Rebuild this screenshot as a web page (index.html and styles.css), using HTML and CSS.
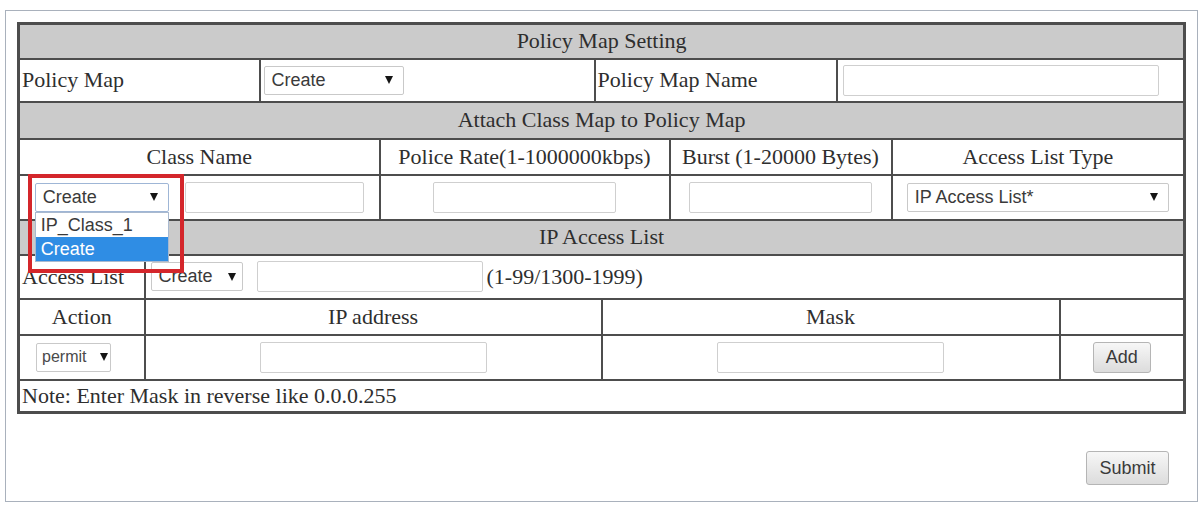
FILE: index.html
```html
<!DOCTYPE html>
<html>
<head>
<meta charset="utf-8">
<title>Policy Map Setting</title>
<link rel="stylesheet" href="styles.css">
</head>
<body>
<div class="frame">
  <table class="grid">
    <colgroup>
      <col class="c1"><col class="c2"><col class="c3"><col class="c4"><col class="c5">
      <col class="c6"><col class="c7"><col class="c8"><col class="c9"><col class="c10">
    </colgroup>
    <tr class="head h35"><td colspan="10">Policy Map Setting</td></tr>
    <tr class="h43">
      <td colspan="2" class="lbl">Policy Map</td>
      <td colspan="2" class="left5"><div class="sel w140"><span>Create</span><span class="arr"></span></div></td>
      <td colspan="3" class="lbl">Policy Map Name</td>
      <td colspan="3" class="left7"><input class="txt w316" type="text"></td>
    </tr>
    <tr class="head h37"><td colspan="10">Attach Class Map to Policy Map</td></tr>
    <tr class="h36 ctr">
      <td colspan="3">Class Name</td>
      <td colspan="3">Police Rate(1-1000000kbps)</td>
      <td colspan="2">Burst (1-20000 Bytes)</td>
      <td colspan="2">Access List Type</td>
    </tr>
    <tr class="h45">
      <td colspan="3">
        <div class="pair">
          <div class="selwrap">
            <div class="sel w134 focus"><span>Create</span><span class="arr"></span></div>
            <div class="droplist">
              <div class="opt">IP_Class_1</div>
              <div class="opt hl">Create</div>
            </div>
            <div class="redbox"></div>
          </div>
          <input class="txt w179" type="text">
        </div>
      </td>
      <td colspan="3" class="ctr"><input class="txt w183" type="text"></td>
      <td colspan="2" class="ctr"><input class="txt w183" type="text"></td>
      <td colspan="2" class="ctr"><div class="sel w262 inl"><span>IP Access List*</span><span class="arr"></span></div></td>
    </tr>
    <tr class="head h35"><td colspan="10">IP Access List</td></tr>
    <tr class="h44">
      <td class="lbl">Access List</td>
      <td colspan="9" class="left7">
        <div class="row">
          <div class="sel w92 tight"><span>Create</span><span class="arr"></span></div>
          <input class="txt w226" type="text">
          <span class="range">(1-99/1300-1999)</span>
        </div>
      </td>
    </tr>
    <tr class="h36 ctr">
      <td>Action</td>
      <td colspan="4">IP address</td>
      <td colspan="4">Mask</td>
      <td></td>
    </tr>
    <tr class="h45 ctr">
      <td class="actcell"><div class="sel w75 tight inl small"><span>permit</span><span class="arr"></span></div></td>
      <td colspan="4"><input class="txt w227" type="text"></td>
      <td colspan="4"><input class="txt w227" type="text"></td>
      <td><button class="btn add" type="button">Add</button></td>
    </tr>
    <tr class="h33"><td colspan="10" class="lbl">Note: Enter Mask in reverse like 0.0.0.255</td></tr>
  </table>
  <div class="actions">
    <button class="btn submit" type="button">Submit</button>
  </div>
</div>
</body>
</html>
```

FILE: styles.css
```css
html, body {
  margin: 0;
  padding: 0;
  background: #ffffff;
}

body {
  font-family: "Liberation Serif", "Times New Roman", serif;
  color: #2e2e2e;
}

.frame {
  margin: 10px 0 0 5px;
  width: 1193px;
  height: 492px;
  box-sizing: border-box;
  border: 1px solid #a9b1bc;
  padding: 11px;
}

.grid {
  width: 1166px;
  table-layout: fixed;
  border-collapse: collapse;
  border: 3px solid #4d4d4d;
  font-size: 22px;
}

.grid td {
  border: 2px solid #4d4d4d;
  padding: 0 3px;
  white-space: nowrap;
  vertical-align: middle;
}

.c1 { width: 126px; }
.c2 { width: 115px; }
.c3 { width: 120px; }
.c4 { width: 215px; }
.c5 { width: 7px; }
.c6 { width: 68px; }
.c7 { width: 167px; }
.c8 { width: 55px; }
.c9 { width: 168px; }
.c10 { width: 125px; }

.h33 { height: 33px; }
.h35 { height: 35px; }
.h36 { height: 36px; }
.h37 { height: 37px; }
.h43 { height: 43px; }
.h44 { height: 44px; }
.h45 { height: 45px; }

.head td {
  background: #cbcbcb;
  text-align: center;
}

.ctr, .ctr td { text-align: center; }

.grid td.lbl { padding-left: 2px; }
.grid td.left5 { padding-left: 3px; }
.grid td.left7 { padding-left: 5px; }
.grid td.actcell { text-align: left; padding-left: 16px; }

/* fake select */
.sel {
  display: flex;
  align-items: center;
  justify-content: space-between;
  box-sizing: border-box;
  height: 29px;
  padding: 0 10px 0 7px;
  background: #ffffff;
  border: 1px solid #c9c9c9;
  border-radius: 2px;
  font-family: "Liberation Sans", Arial, sans-serif;
  font-size: 18px;
  color: #3a3a3a;
  text-align: left;
}
.sel.inl { display: inline-flex; vertical-align: middle; }
.sel.tight { justify-content: flex-start; gap: 15px; padding-right: 6px; }
.sel.small { font-size: 16px; gap: 14px; padding-left: 5px; color: #4a4a4a; }
.sel.focus { border-color: #9fb6d6; }

.arr {
  width: 0;
  height: 0;
  border-left: 4px solid transparent;
  border-right: 4px solid transparent;
  border-top: 8px solid #151515;
}

.w75 { width: 75px; }
.w92 { width: 92px; }
.w134 { width: 134px; }
.w140 { width: 140px; }
.w262 { width: 262px; }

.txt {
  box-sizing: border-box;
  height: 31px;
  margin: 0;
  padding: 0 4px;
  border: 1px solid #cfcfcf;
  border-radius: 2px;
  background: #ffffff;
  vertical-align: middle;
}
.w179 { width: 179px; }
.w183 { width: 183px; }
.w226 { width: 226px; }
.w227 { width: 227px; }
.w316 { width: 316px; }

.pair {
  display: flex;
  align-items: center;
  justify-content: center;
  gap: 16px;
}

.selwrap {
  position: relative;
}

.droplist {
  position: absolute;
  left: 0;
  top: 29px;
  width: 134px;
  box-sizing: border-box;
  background: #ffffff;
  border: 1px solid #a9b9cf;
  font-family: "Liberation Sans", Arial, sans-serif;
  font-size: 18px;
  color: #3a3a3a;
  text-align: left;
  z-index: 3;
}
.opt {
  height: 24px;
  line-height: 24px;
  padding-left: 5px;
}
.opt.hl {
  background: #2f8de4;
  color: #ffffff;
}

.redbox {
  position: absolute;
  left: -7px;
  top: -9px;
  width: 156px;
  height: 99px;
  box-sizing: border-box;
  border: 4px solid #d4262b;
  z-index: 4;
}

.row {
  display: flex;
  align-items: center;
}
.row .txt { margin-left: 14px; }
.range { margin-left: 4px; }

.btn {
  box-sizing: border-box;
  margin: 0;
  padding: 0;
  border: 1px solid #b5b5b5;
  border-radius: 3px;
  background: linear-gradient(#f7f7f7, #dcdcdc);
  font-family: "Liberation Sans", Arial, sans-serif;
  font-size: 18px;
  color: #3a3a3a;
}
.add { width: 58px; height: 31px; }
.submit { width: 83px; height: 34px; }

.actions {
  display: flex;
  justify-content: flex-end;
  padding-right: 17px;
  margin-top: 37px;
}
```
